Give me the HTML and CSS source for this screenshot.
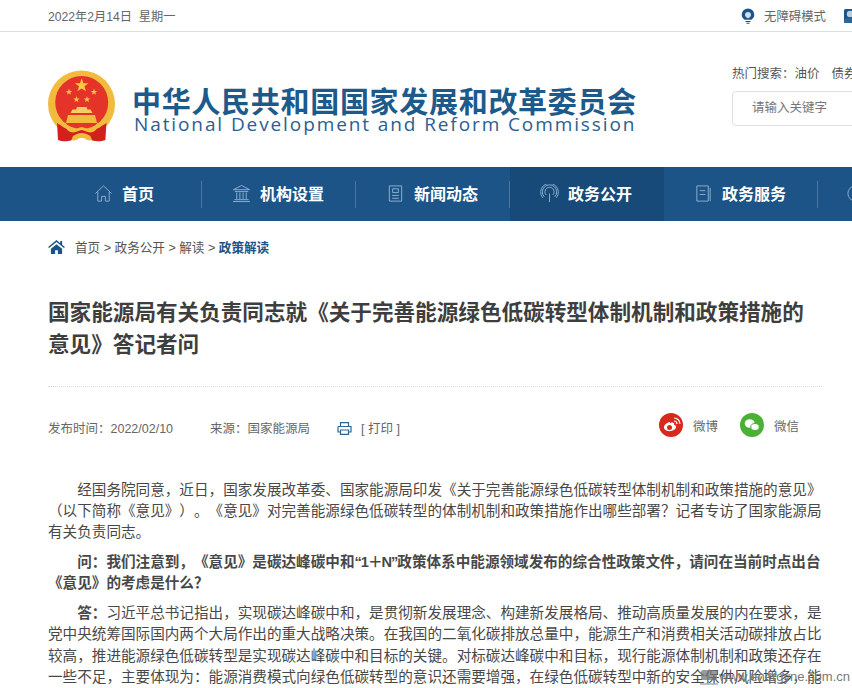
FILE: index.html
```html
<!DOCTYPE html>
<html lang="zh-CN">
<head>
  <meta charset="UTF-8" />
  <title>国家发展和改革委员会</title>
  <link rel="stylesheet" href="styles.css">
</head>
<body>

<div class="pagina">

  <!-- barra superior -->
  <div class="top_bar">
    <span class="fecha">2022年2月14日&nbsp; 星期一</span>
    <span class="accesible">
      <svg class="ico_bulb" viewBox="0 0 14 16"><path d="M7 0.500a6.300 6.300 0 0 1 6.300 6.300c0 2.400-1.500 3.800-2.800 5H3.500c-1.300-1.200-2.800-2.600-2.800-5A6.300 6.300 0 0 1 7 0.500z" fill="#1c5487"/><path d="M4.500 13h5v1h-5zM5.500 14.800h3v1h-3z" fill="#1c5487"/><path d="M7 4a3 3 0 0 1 3 3c0 1.500-1.500 2.500-3 3.500C5.500 9.500 4 8.500 4 7a3 3 0 0 1 3-3z" fill="#cfe0ee"/></svg>
      无障碍模式
      <svg class="ico_movil" viewBox="0 0 14 14"><rect width="14" height="14" rx="1.500" fill="#1c5487"/><circle cx="6" cy="5" r="3.200" fill="#b9cfe2"/><path d="M0 10l14-2v6H0z" fill="#2c6799"/></svg>
    </span>
  </div>

  <!-- logo y buscador -->
  <div class="cabecera">
    <svg class="emblema" viewBox="0 0 70 74">
      <defs>
        <polygon id="estrella" points="0,-10 2.350,-3.100 9.500,-3.100 3.800,1.200 5.900,8.100 0,4 -5.900,8.100 -3.800,1.200 -9.500,-3.100 -2.350,-3.100" />
      </defs>
      <circle cx="33.500" cy="34" r="33.500" fill="#f1bb3d"/>
      <circle cx="33.700" cy="32.500" r="26.500" fill="#e4342a"/>
      <use href="#estrella" transform="translate(33.700 15.500) scale(.72)" fill="#f6c945"/>
      <use href="#estrella" transform="translate(21 22) scale(.34)" fill="#f6c945"/>
      <use href="#estrella" transform="translate(46 22) scale(.34)" fill="#f6c945"/>
      <use href="#estrella" transform="translate(28.500 29.500) scale(.34)" fill="#f6c945"/>
      <use href="#estrella" transform="translate(39 29.500) scale(.34)" fill="#f6c945"/>
      <path d="M29 37h9.500l1 2.500h3l2 3.500h-22l2-3.500h3.500z" fill="#f4cd62"/>
      <path d="M20 45h27l2 8H18z" fill="#f1bb3d"/>
      <path d="M9 53c5 3 9 7 15 7 4 0 7-2 9.700-2 2.700 0 5.700 2 9.700 2 6 0 10-4 15-7l-1 17c-5 2-10 1-13 .5-3-2-7-4-10.700-4s-7.700 2-10.700 4c-3 .5-8 1.500-13-.5z" fill="#d2201c"/>
      <path d="M17 52c3 5 8 8 12 6.500 2-.7 3.500-1.500 4.700-1.500s2.700.8 4.700 1.500C42 60 47 57 50 52c1 6-3 10.500-8 10.500-3 0-6-2.500-8.300-2.500s-5.300 2.500-8.300 2.500c-5 0-9.400-4.500-8.400-10.500z" fill="#f1bb3d"/>
      <path d="M25 66c3-2 6-3 8.700-3s5.700 1 8.700 3l1.600 4c-3 .8-5 .3-6.500-1-1-.8-2.300-1.200-3.800-1.200s-2.800.4-3.800 1.200c-1.500 1.300-3.500 1.800-6.500 1z" fill="#f1bb3d"/>
    </svg>
    <div class="logo_textos">
      <div class="logo_cn">中华人民共和国国家发展和改革委员会</div>
      <div class="logo_en">National Development and Reform Commission</div>
    </div>
    <div class="buscador">
      <div class="hot">热门搜索：<span>油价</span><span>债券</span></div>
      <div class="caja">请输入关键字</div>
    </div>
  </div>

  <!-- menu -->
  <div class="menu">
    <div class="menu_item">
      <svg viewBox="0 0 20 20"><path d="M1.500 10L10 2l8.500 8M4 8.500V18h4v-5h4v5h4V8.500" /></svg>
      <span>首页</span>
    </div>
    <div class="menu_item">
      <svg viewBox="0 0 20 20"><path d="M1.500 6L10 1.500 18.500 6zM3 8h14M5 9v7M8.300 9v7M11.700 9v7M15 9v7M2.500 16.500h15M1 18.500h18" /></svg>
      <span>机构设置</span>
    </div>
    <div class="menu_item">
      <svg viewBox="0 0 20 20"><path d="M3.500 2h13v16h-13zM7 5h6v4H7zM6.500 12h7M6.500 15h7" /></svg>
      <span>新闻动态</span>
    </div>
    <div class="menu_item activo">
      <svg viewBox="0 0 20 20"><path d="M10 10v9M6.500 11.500a4.800 4.800 0 1 1 7 0M4.500 13.500a7.500 7.500 0 1 1 11 0M2.800 14.500a9.300 9.300 0 1 1 14.400 0" /></svg>
      <span>政务公开</span>
    </div>
    <div class="menu_item">
      <svg viewBox="0 0 20 20"><path d="M3 2h12v16H3zM17 4v14M6 7h6M6 11h6" /></svg>
      <span>政务服务</span>
    </div>
    <div class="menu_item ultimo">
      <svg viewBox="0 0 20 20"><circle cx="10" cy="10" r="8" /></svg>
    </div>
  </div>

  <div class="contenido">

    <div class="migas">
      <svg class="ico_casa" viewBox="0 0 18 15"><path d="M9 0L0 7.500l1 1.200L9 2.200l8 6.500 1-1.200-3-2.500V1h-2v2.600zM3 9.500V15h4.500v-4h3v4H15V9.500L9 4.500z" fill="#1c5487"/></svg>
      <span>首页 &gt; 政务公开 &gt; 解读 &gt; <b>政策解读</b></span>
    </div>

    <h1 class="titulo">国家能源局有关负责同志就《关于完善能源绿色低碳转型体制机制和政策措施的意见》答记者问</h1>

    <div class="meta">
      <span class="meta_fecha">发布时间：2022/02/10</span>
      <span class="meta_fuente">来源：国家能源局</span>
      <svg class="ico_print" viewBox="0 0 15 13"><path d="M3.500 4V.7h8V4M1 4.500h13v5.500h-2.500M3.500 10H1V4.500M3.500 8h8v4.300h-8z" /></svg>
      <span class="imprimir">[ 打印 ]</span>
      <div class="compartir">
        <svg class="ico_red" viewBox="0 0 24 24"><circle cx="12" cy="12" r="12" fill="#d9281c"/><path d="M10.500 9c-3.500 1-6 3.500-5.500 6 .5 2.500 4 3.500 7 3s5.500-2.500 5-4.500c-.3-1-1.300-1.500-2-1.700.5-1.300 0-2.300-1.500-2.300-1 0-2.500.7-2.500.7s.5-1.700-.5-1.200z" fill="#fff"/><circle cx="10.500" cy="14.500" r="2.500" fill="#d9281c"/><path d="M15 8c1.700 0 3 1.300 3 3M15 5c3.300 0 6 2.700 6 6" stroke="#fff" stroke-width="1.200" fill="none"/></svg>
        <span class="red_txt">微博</span>
        <svg class="ico_red" viewBox="0 0 24 24"><circle cx="12" cy="12" r="12" fill="#4bb135"/><ellipse cx="9.700" cy="10.500" rx="5" ry="4.200" fill="#fff"/><ellipse cx="15" cy="14" rx="4.200" ry="3.500" fill="#fff" stroke="#4bb135" stroke-width="1"/></svg>
        <span class="red_txt">微信</span>
      </div>
    </div>

    <div class="articulo">
      <p>经国务院同意，近日，国家发展改革委、国家能源局印发《关于完善能源绿色低碳转型体制机制和政策措施的意见》（以下简称《意见》）。《意见》对完善能源绿色低碳转型的体制机制和政策措施作出哪些部署？记者专访了国家能源局有关负责同志。</p>
      <p><b>问：我们注意到，《意见》是碳达峰碳中和<span class="cita_num">“1＋N”</span>政策体系中能源领域发布的综合性政策文件，请问在当前时点出台《意见》的考虑是什么？</b></p>
      <p><b>答：</b>习近平总书记指出，实现碳达峰碳中和，是贯彻新发展理念、构建新发展格局、推动高质量发展的内在要求，是党中央统筹国际国内两个大局作出的重大战略决策。在我国的二氧化碳排放总量中，能源生产和消费相关活动碳排放占比较高，推进能源绿色低碳转型是实现碳达峰碳中和目标的关键。对标碳达峰碳中和目标，现行能源体制机制和政策还存在一些不足，主要体现为：能源消费模式向绿色低碳转型的意识还需要增强，在绿色低碳转型中新的安全保供风险增多，能源绿色低碳转型的政策保障还不够完善。</p>
    </div>
  </div>

  <!-- marca de agua sobre la captura -->
  <div class="marca_agua">
    <svg class="marca_logo" viewBox="0 0 18 16"><rect x="1" y="0" width="16" height="10" rx="2" fill="#777" opacity=".75"/><rect x="0" y="13" width="18" height="2" fill="#999" opacity=".6"/></svg>
    <span>www.energyne.com.cn</span>
  </div>
</div>

</body>
</html>
```

FILE: styles.css
```css
html, body {
  margin: 0;
  padding: 0;
  height: 100%;
  overflow: hidden;
  background: #fff;
  font-family: "Liberation Sans", "Noto Sans CJK SC", sans-serif;
  color: #555;
  text-spacing-trim: space-all;
}

.pagina {
  position: relative;
  width: 852px;
  height: 688px;
  overflow: hidden;
}

.top_bar {
  height: 31px;
  border-bottom: 1px solid #dcdfe3;
  display: flex;
  justify-content: space-between;
  align-items: center;
  padding: 0 0 0 48px;
  font-size: 12.200px;
  color: #666;
}

.accesible {
  display: flex;
  align-items: center;
  gap: 9px;
  margin-right: -6px;
  font-size: 12.400px;
}

.ico_bulb {
  width: 14px;
  height: 16px;
}

.ico_movil {
  width: 14px;
  height: 14px;
  margin-left: 9px;
}

.cabecera {
  height: 135px;
  display: flex;
  align-items: center;
  padding-left: 48px;
}

.emblema {
  width: 70px;
  height: 74px;
  flex-shrink: 0;
  margin-top: 14px;
}

.logo_textos {
  margin-left: 14px;
  margin-top: 19px;
  width: 504px;
  flex-shrink: 0;
}

.logo_cn {
  font-size: 29px;
  line-height: 30px;
  font-weight: 700;
  color: #1d5a8c;
  letter-spacing: 0.700px;
  white-space: nowrap;
  font-family: "Noto Sans CJK SC", sans-serif;
}

.logo_en {
  font-family: "Open Sans", sans-serif;
  font-size: 19px;
  line-height: 18px;
  padding-left: 2px;
  color: #2a6090;
  letter-spacing: 1.900px;
  white-space: nowrap;
}

.buscador {
  margin-left: 96px;
  margin-top: -7px;
  flex-shrink: 0;
  width: 300px;
}

.hot {
  font-size: 12.500px;
  color: #555;
  line-height: 16px;
}

.hot span {
  margin-right: 12px;
}

.caja {
  box-sizing: border-box;
  margin-top: 9px;
  width: 280px;
  height: 35px;
  border: 1px solid #dde1e5;
  border-radius: 4px;
  font-size: 12.500px;
  line-height: 33px;
  padding-left: 19px;
  color: #777;
}

.menu {
  height: 54px;
  background: #1c5487;
  display: flex;
  padding-left: 48px;
}

.menu_item {
  position: relative;
  width: 154px;
  flex-shrink: 0;
  display: flex;
  justify-content: center;
  align-items: center;
  gap: 9px;
  color: #fff;
  font-size: 16px;
  line-height: 52px;
  padding: 0 2px 2px 0;
  box-sizing: border-box;
  font-weight: 700;
  font-family: "Noto Sans CJK SC", sans-serif;
}

.menu_item::after {
  content: "";
  position: absolute;
  right: 0;
  top: 14px;
  height: 27px;
  width: 1px;
  background: #4a78a2;
}

.menu_item svg {
  width: 19px;
  height: 19px;
  fill: none;
  stroke: #8fb0cd;
  stroke-width: 1;
}

.menu_item.activo {
  background: #174a79;
}

.menu_item.activo::after {
  display: none;
}

.menu_item.ultimo {
  justify-content: flex-start;
  padding-left: 28px;
}

.contenido {
  padding: 0 30px 0 48px;
}

.migas {
  height: 50px;
  display: flex;
  align-items: center;
  gap: 10px;
  font-size: 12.600px;
  color: #555;
}

.migas b {
  color: #1c5487;
}

.ico_casa {
  width: 17px;
  height: 14px;
  margin-top: 2px;
}

.titulo {
  box-sizing: border-box;
  margin: 24px 0 0;
  font-size: 21.600px;
  line-height: 32px;
  font-weight: 700;
  color: #3e3e3e;
  height: 92px;
  border-bottom: 1px dotted #d8d8d8;
  font-family: "Noto Sans CJK SC", sans-serif;
}

.meta {
  height: 80px;
  display: flex;
  align-items: center;
  font-size: 12.500px;
  color: #666;
}

.meta_fuente {
  margin-left: 37px;
}

.ico_print {
  width: 15px;
  height: 13px;
  fill: none;
  stroke: #2f6491;
  stroke-width: 1.200;
  margin-left: 27px;
  margin-top: 3px;
}

.imprimir {
  margin-left: 9px;
}

.compartir {
  display: flex;
  align-items: center;
  margin-left: auto;
  margin-right: 23px;
  margin-top: -4px;
}

.ico_red {
  width: 24px;
  height: 24px;
}

.red_txt {
  margin-left: 10px;
  margin-right: 22px;
}

.red_txt:last-child {
  margin-right: 0;
}

.articulo {
  padding-top: 12.500px;
  font-size: 14.600px;
  line-height: 21.300px;
  color: #484848;
}

.articulo p {
  margin: 0 0 8.500px;
  text-indent: 2em;
}

.cita_num {
  letter-spacing: -1px;
}

.marca_agua {
  position: absolute;
  right: 2px;
  bottom: 2px;
  display: flex;
  align-items: flex-end;
  gap: 1px;
  font-size: 13px;
  line-height: 18px;
  color: #777;
}

.marca_logo {
  width: 18px;
  height: 16px;
}
```
